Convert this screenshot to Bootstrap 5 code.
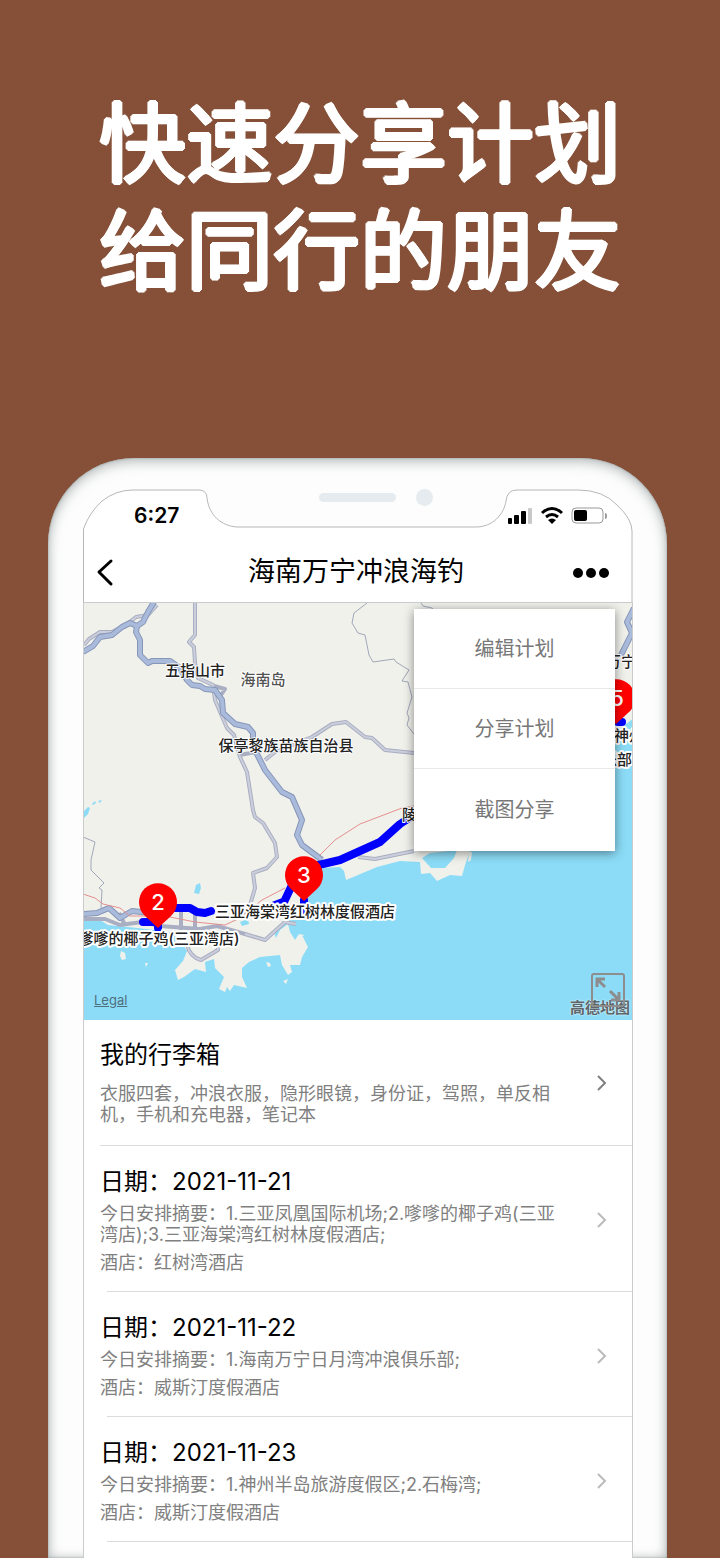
<!DOCTYPE html>
<html lang="zh-CN">
<head>
<meta charset="utf-8">
<meta name="viewport" content="width=device-width, initial-scale=1">
<title>海南万宁冲浪海钓</title>
<link href="https://cdn.jsdelivr.net/npm/bootstrap@5.3.0/dist/css/bootstrap.min.css" rel="stylesheet">
<style>
  body { background: #855037; font-family: Inter, "Noto Sans CJK SC", sans-serif; color: #000; }
  .headline { padding-top: 91px; margin-bottom: 153px; font-size: 87px; line-height: 107px; font-weight: 400; color: #fff;
    text-shadow: 2px 0, -2px 0, 0 2px, 0 -2px, 1px 1px, -1px 1px, 1px -1px, -1px -1px; }
  .phone { margin: 0 53px 0 48px; padding: 31px 34px 0 35px; border-radius: 86px 86px 0 0; background: #fdfdfd; box-shadow: inset 0 0 2px #8f9a9a, inset 0 4px 14px rgba(120,130,130,.4), inset 0 0 10px rgba(120,130,130,.35); }
  .bezel { top: 0; left: 0; height: 113px; }
  .edges { border: solid #c9cbcc; border-width: 0 1px; background: #fff; }
  .speaker { width: 77px; height: 9px; margin-right: 20px; background: #e5ebef; border-radius: 5px; }
  .lens { width: 17px; height: 17px; background: #e5ebef; }
  .sensors { top: 0; left: 236px; right: 0; }
  .statusbar { height: 53px; padding: 0 26px 0 51px; }
  .clock { font-size: 21px; font-weight: 600; }
  .topbar { height: 60px; padding: 0 18px 0 10px; }
  .topbar h2 { font-size: 27px; line-height: 40px; }
  .tool { border: 0; padding: 0; background: none; width: 48px; height: 40px; }
  .back { width: 52px; text-align: left; }
  .map { height: 418px; border-top: 1px solid #c9cbcc; }
  .label { font-size: 15px; font-weight: 500; fill: #222; stroke: #fff; stroke-width: 4px; paint-order: stroke; stroke-linejoin: round; }
  .town { stroke-width: 2px; }
  .pin text { font-size: 22px; font-weight: 500; fill: #fff; }
  .legal { left: 10px; bottom: 11px; font-size: 13px; line-height: 18px; color: #4e6f7c; }
  .full { right: 6px; bottom: 12px; width: 36px; height: 36px; border: 0; padding: 0; background: none; }
  .brand { right: 2px; bottom: 2px; font-size: 15px; line-height: 21px; font-weight: 700; color: #5d666a; text-shadow: 0 0 2px #fff; }
  .actions { top: 6px; right: 17px; width: 201px; background: #fff; box-shadow: 0 2px 10px rgba(0,0,0,.45); }
  .actions button { height: 80px; border: 0; border-bottom: 1px solid #e8e8e8; background: #fff; color: #777; font-size: 20px; }
  .actions button:last-child { height: 82px; border-bottom: 0; }
  .plan::after { content: ""; display: block; height: 1px; margin-left: 23px; background: #dcdcdc; }
  .plan:first-child::after { margin-left: 16px; }
  .plan a { padding: 21px 24px 18px 16px; color: #808080; line-height: 21px; }
  .plan:first-child a { padding-top: 20px; padding-bottom: 20px; }
  .plan h3 { font-size: 24px; line-height: 30px; font-weight: 400; color: #000; margin-bottom: 6px; }
  .plan:first-child h3 { margin-bottom: 13px; }
  .hotel { margin-top: 7px; }
  .plan p { font-size: 18px; white-space: nowrap; }
</style>
</head>
<body>
<main class="d-flex flex-column min-vh-100 overflow-hidden">
  <h1 class="headline text-center">快速分享计划<br>给同行的朋友</h1>
  <section class="phone flex-grow-1 d-flex flex-column">
    <div class="position-relative flex-grow-1 d-flex flex-column">
      <svg class="bezel position-absolute w-100" viewBox="0 0 550 113" preserveAspectRatio="none" fill="#fff" stroke="#b5b8ba" aria-hidden="true">
        <path d="M.5 114V40Q6 24 19 12Q33 1 50 1H117Q124 2 124 9C126 26 138 37 154 38H393C410 38 421 25 423 12Q424 1 434 1H495Q520 1 534 16Q549 30 549 42V114"/>
      </svg>
      <div class="sensors position-absolute d-flex align-items-center" aria-hidden="true"><span class="speaker"></span><span class="lens rounded-circle"></span></div>
      <div class="statusbar position-relative d-flex justify-content-between align-items-center">
        <span class="clock">6:27</span>
        <svg width="99" height="20" viewBox="508 505 99 20" aria-label="信号、无线网络和电池">
          <rect x="508" y="517" width="4" height="6" rx="1"/><rect x="514" y="514" width="5" height="9" rx="1"/><rect x="521" y="510" width="5" height="13" rx="1"/><rect x="528" y="507" width="4" height="16" rx="1" fill="#c8c8c8"/>
          <g fill="none" stroke="#000" stroke-width="3"><path d="M542 512Q552 503 562 512"/><path d="M546 516Q552 511 558 516"/></g><path d="M548 519Q552 516 556 519L552 523Z"/>
          <rect x="572" y="507" width="31" height="15" rx="4" fill="none" stroke="#999"/><rect x="574" y="509" width="13" height="11" rx="2"/><path d="M605 512q2 0 2 3t-2 3z" fill="#999"/>
        </svg>
      </div>
      <header class="topbar position-relative d-flex justify-content-between align-items-center">
        <button class="tool back" aria-label="返回"><svg width="28" height="30" viewBox="0 0 28 30" fill="none" stroke="#000" stroke-width="3" stroke-linecap="round" stroke-linejoin="round"><path d="M18 4L6 15L18 27"/></svg></button>
        <h2 class="m-0 fw-normal">海南万宁冲浪海钓</h2>
        <button class="tool" aria-label="更多"><svg width="36" height="12" viewBox="0 0 36 12"><circle cx="5" cy="5" r="5"/><circle cx="18" cy="5" r="5"/><circle cx="31" cy="5" r="5"/></svg></button>
      </header>
      <div class="edges flex-grow-1">
      <div class="map position-relative overflow-hidden">
        <svg class="d-block w-100 h-100" viewBox="84 603 548 417" preserveAspectRatio="xMinYMin slice" role="img" aria-label="路线地图">
          <rect x="83" y="602" width="551" height="419" fill="#f1f1ec"/>
          <path fill="#8cdcf7" d="M83 918L100 920L108 925L128 927L146 929L170 932L180 940L187 951L183 961L175 970L178 980L184 977L195 969L206 972L205 962L214 959L215 968L224 977L219 989L225 992L227 987L230 991L234 985L247 988L242 977L242 968L249 962L260 957L280 955L282 965L288 975L292 972L290 965L300 965L302 957L308 947L303 937L299 934L295 940L290 932L288 924L280 930L276 938L274 932L287 920L297 920L303 900L315 880L323 868L340 867L344 871L346 880L358 875L377 867L400 861L420 862L421 874L430 873L437 881L450 875L462 876L465 865L470 851L520 820L580 760L615 736L625 725L634 718V1021H83Z"/>
          <g fill="#8cdcf7"><path d="M422 858L430 853L457 850L454 858L445 868L431 868ZM196 885l4-2 1 5-2 6-5-1zM83 812l5-5 2 1-2 6-5 5zM92 804l3-3 1 2-3 2zM98 801l4-1-2 3zM240 922l8-3 1 5-7 2z"/></g>
          <g fill="#f1f1ec"><path d="M121 951l4 2 1 6-4 1-2-4zM145 963l3 0-2 4zM266 962l4 1 1 3-3 1zM283 981l5-2-2 5zM299 934l5 1-2 2zM469 852l3 0-1 8-3 2z"/></g>
          <g fill="none" stroke-linejoin="round">
            <path stroke="#a9aec2" stroke-width="4" d="M84 645L89 639L100 632L112 632L127 624L136 617L148 615L157 605M195 603V635L189 642L194 647L195 663L198 678L213 685L215 700L227 728L234 735L240 757L247 772L253 810L255 817L263 823L275 843L277 857L267 868L253 873L255 888L250 905L240 918M214 686L225 689L221 695M240 755L256 752M265 760L275 752L312 737L332 724L346 722L365 737L372 738L385 750L414 753M83 919L105 919L120 925L142 922L160 926L200 929L217 926L245 934L265 940L285 922L296 924M187 945Q190 957 201 960L218 950L216 933M181 910V930M195 912V930M119 913L125 925M358 857L375 859L414 851"/>
            <path stroke="#cbcedb" stroke-width="2" d="M84 645L89 639L100 632L112 632L127 624L136 617L148 615L157 605M195 603V635L189 642L194 647L195 663L198 678L213 685L215 700L227 728L234 735L240 757L247 772L253 810L255 817L263 823L275 843L277 857L267 868L253 873L255 888L250 905L240 918M265 760L275 752L312 737L332 724L346 722L365 737L372 738L385 750L414 753M245 934L265 940L285 922L296 924M187 945Q190 957 201 960L218 950L216 933M358 857L375 859L414 851"/>
            <path stroke="#a1a7b8" stroke-width="1" d="M367 603L354 613L352 623L358 633L365 635L369 655L373 662L394 659L396 662L409 670L402 681L408 682L412 697L407 713L409 718L407 725L414 734M421 603L423 606L432 608L434 611M83 837L95 842L91 860L91 870L104 883L99 888L102 890L101 908"/>
            <path stroke="#8696b8" stroke-width="6" d="M83 652L93 646L100 637L112 635L122 627L130 623L137 626L143 622L148 612L154 602M137 626L136 632L140 640V655L148 663L152 661H170L180 668L187 680L192 685L200 686L205 689L215 690L222 700L223 713L235 724L248 727L253 733V746L265 770L282 792L292 797L302 820L297 835L302 845L322 860M83 914L97 913L109 908L120 918L132 911L160 914M634 608L627 622L632 633L621 655"/>
            <path stroke="#a9badb" stroke-width="4" d="M83 652L93 646L100 637L112 635L122 627L130 623L137 626L143 622L148 612L154 602M137 626L136 632L140 640V655L148 663L152 661H170L180 668L187 680L192 685L200 686L205 689L215 690L222 700L223 713L235 724L248 727L253 733V746L265 770L282 792L292 797L302 820L297 835L302 845L322 860M83 914L97 913L109 908L120 918L132 911L160 914M634 608L627 622L632 633L621 655"/>
            <path stroke="#e58f8f" stroke-width="1" d="M83 894L95 898L103 904L120 908L130 916H165L195 922L225 925L240 918L262 900L285 888M320 855L335 840L360 824L402 808L414 806"/>
            <path stroke="#00f" stroke-width="8" stroke-linecap="round" d="M618 722H622M414 815L400 824L380 842L360 851L340 860L310 867L292 885L284 902M304 900V910M211 911L205 913L197 912L190 908H165M143 922H158V928M283 902L262 910"/>
          </g>
          <text class="label town" x="402" y="820">陵水</text>
          <text class="label town" x="195" y="676" text-anchor="middle">五指山市</text>
          <text class="label town" x="263" y="685" text-anchor="middle" fill-opacity=".8">海南岛</text>
          <text class="label town" x="286" y="751" text-anchor="middle">保亭黎族苗族自治县</text>
          <text class="label town" x="606" y="667">万宁</text>
          <text class="label" x="614" y="741">神州</text>
          <text class="label" x="602" y="765">乐部</text>
          <text class="label" x="305" y="917" text-anchor="middle">三亚海棠湾红树林度假酒店</text>
          <text class="label" x="159" y="944" text-anchor="middle">嗲嗲的椰子鸡(三亚湾店)</text>
          <g class="pin" fill="#f00" text-anchor="middle">
            <path d="M158 928L145 916A19 19 0 1 1 171 916Z"/><text x="158" y="910">2</text>
            <path d="M304 901L291 889A19 19 0 1 1 317 889Z"/><text x="304" y="883">3</text>
            <path d="M616 724L603 712A19 19 0 1 1 629 712Z"/><text x="617" y="706">5</text>
          </g>
        </svg>
        <a class="legal position-absolute" href="#">Legal</a>
        <span class="brand position-absolute">高德地图</span>
        <button class="full position-absolute" aria-label="全屏"><svg class="d-block" width="36" height="36" viewBox="0 0 36 36" fill="none" stroke="#8d8d8d" stroke-width="2"><rect x="2" y="2" width="32" height="32" rx="2"/><path stroke-width="3" d="M7 15V7H15M7 7L15 15M29 20V28H21M29 28L20 19"/></svg></button>
        <div class="actions position-absolute d-flex flex-column">
          <button>编辑计划</button><button>分享计划</button><button>截图分享</button>
        </div>
      </div>
      <ul class="list-unstyled m-0">
        <li class="plan"><a href="#" class="d-flex justify-content-between align-items-center text-decoration-none">
          <div><h3>我的行李箱</h3><p class="m-0">衣服四套，冲浪衣服，隐形眼镜，身份证，驾照，单反相<br>机，手机和充电器，笔记本</p></div>
          <svg class="flex-shrink-0" width="12" height="18" viewBox="0 0 12 18" fill="none" stroke="#808080" stroke-width="2"><path d="M2 2L9 9L2 16"/></svg></a></li>
        <li class="plan"><a href="#" class="d-flex justify-content-between align-items-center text-decoration-none">
          <div><h3>日期：2021-11-21</h3><p class="m-0">今日安排摘要：1.三亚凤凰国际机场;2.嗲嗲的椰子鸡(三亚<br>湾店);3.三亚海棠湾红树林度假酒店;</p><p class="hotel mb-0">酒店：红树湾酒店</p></div>
          <svg class="flex-shrink-0" width="12" height="18" viewBox="0 0 12 18" fill="none" stroke="#bbb" stroke-width="2"><path d="M2 2L9 9L2 16"/></svg></a></li>
        <li class="plan"><a href="#" class="d-flex justify-content-between align-items-center text-decoration-none">
          <div><h3>日期：2021-11-22</h3><p class="m-0">今日安排摘要：1.海南万宁日月湾冲浪俱乐部;</p><p class="hotel mb-0">酒店：威斯汀度假酒店</p></div>
          <svg class="flex-shrink-0" width="12" height="18" viewBox="0 0 12 18" fill="none" stroke="#bbb" stroke-width="2"><path d="M2 2L9 9L2 16"/></svg></a></li>
        <li class="plan"><a href="#" class="d-flex justify-content-between align-items-center text-decoration-none">
          <div><h3>日期：2021-11-23</h3><p class="m-0">今日安排摘要：1.神州半岛旅游度假区;2.石梅湾;</p><p class="hotel mb-0">酒店：威斯汀度假酒店</p></div>
          <svg class="flex-shrink-0" width="12" height="18" viewBox="0 0 12 18" fill="none" stroke="#bbb" stroke-width="2"><path d="M2 2L9 9L2 16"/></svg></a></li>
      </ul>
      </div>
    </div>
  </section>
</main>
<script src="https://cdn.jsdelivr.net/npm/bootstrap@5.3.0/dist/js/bootstrap.bundle.min.js"></script>
</body>
</html>
